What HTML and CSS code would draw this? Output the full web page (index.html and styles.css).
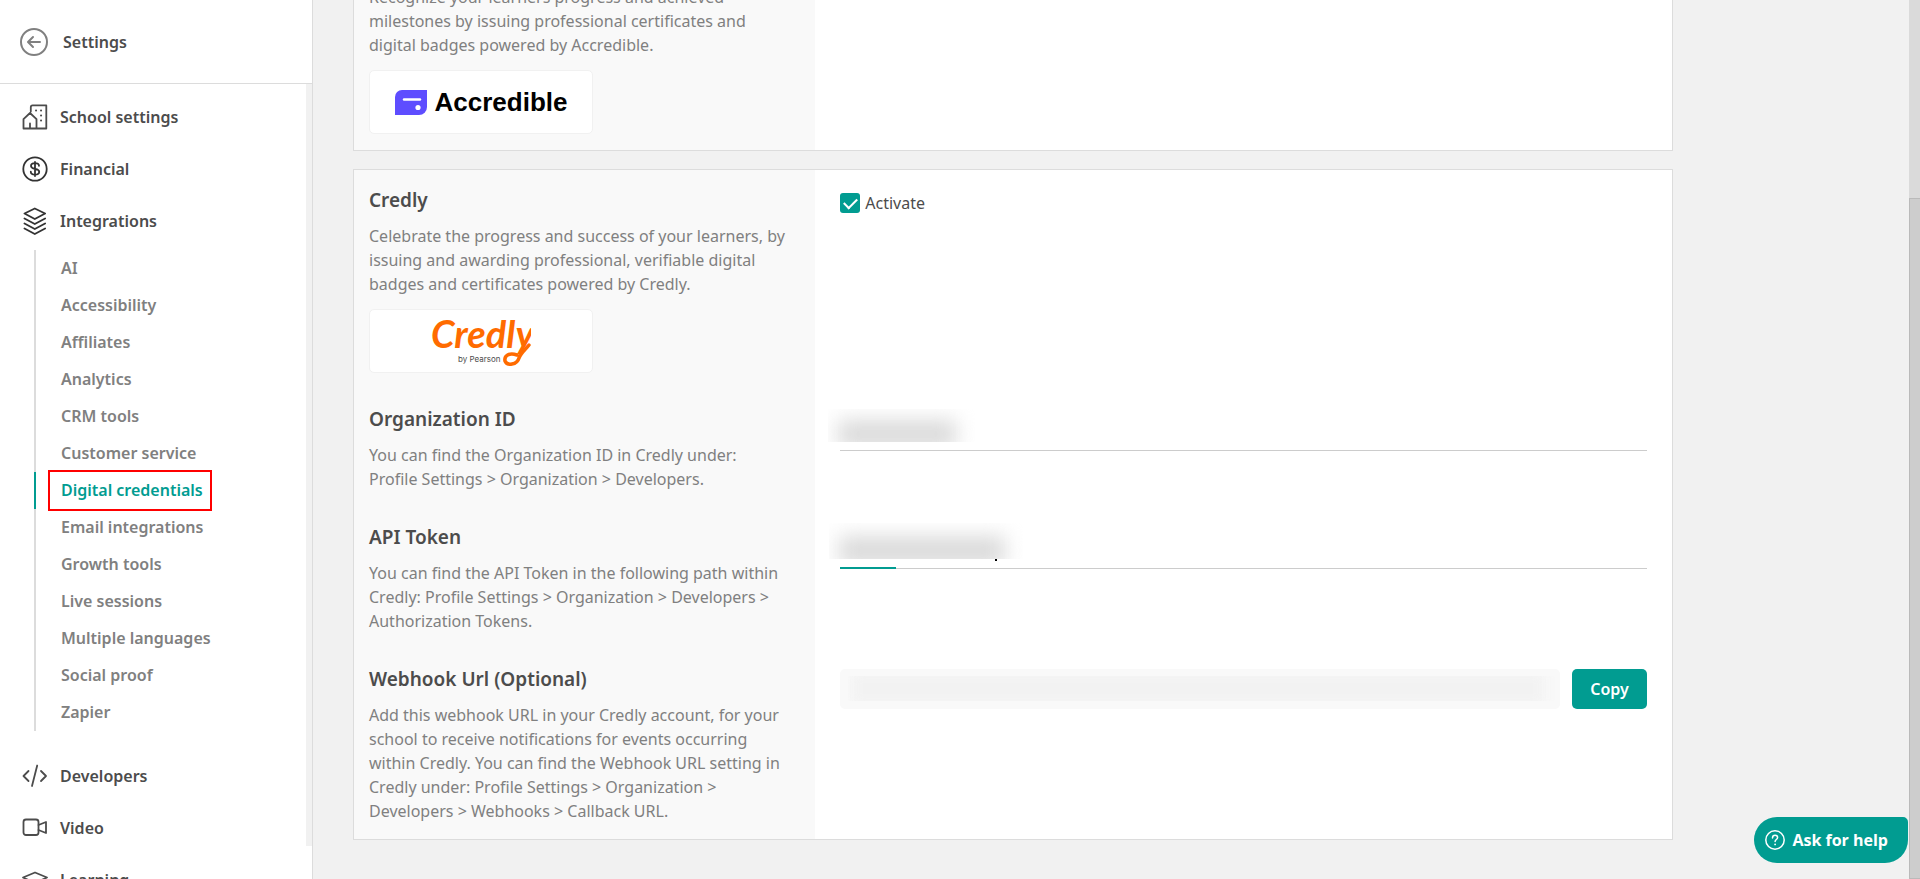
FILE: index.html
```html
<!DOCTYPE html>
<html lang="en">
<head>
  <meta charset="UTF-8" />
  <meta name="viewport" content="width=device-width, initial-scale=1.0" />
  <title>Settings - Digital credentials</title>
  <link rel="stylesheet" href="styles.css">
</head>
<body>
  <div class="app">
    <aside class="sidebar">
      <header class="sidebar-header">
        <a href="#" class="back" aria-label="Back">
          <svg width="28" height="28" viewBox="0 0 28 28" fill="none" stroke="#808080" stroke-width="2" stroke-linecap="round" stroke-linejoin="round">
            <circle cx="14" cy="14" r="13"/>
            <path d="M20 14H8.5M13 9l-5 5 5 5"/>
          </svg>
        </a>
        <span>Settings</span>
      </header>

      <div class="sidebar-body">
        <nav class="menu">
          <a href="#" class="menu-item">
            <svg width="26" height="26" viewBox="0 0 26 26" fill="none" stroke="#4c4c4c" stroke-width="1.8" stroke-linecap="round" stroke-linejoin="round">
              <path d="M8.800 7.500V3.200A1.800 1.800 0 0 1 10.600 1.400H24.300V24.500H14.500M1.500 24.500V15.200L8 9l6.500 6.200V24.500zM8 24.300v-4.800"/>
              <path d="M14 6.500h.1M19 6.500h.1M19 11.500h.1M19 16.500h.1" stroke-width="2"/>
            </svg>
            School settings
          </a>
          <a href="#" class="menu-item">
            <svg width="26" height="26" viewBox="0 0 26 26" fill="none" stroke="#333" stroke-width="1.800" stroke-linecap="round" stroke-linejoin="round">
              <circle cx="13" cy="13" r="11.700"/>
              <path d="M17 9.800c0-1.700-1.500-2.600-4-2.600s-4 1-4 2.800c0 4 8.200 1.800 8.200 5.700 0 1.900-1.700 2.900-4.200 2.900s-4.200-1-4.200-2.900M13 6v14"/>
            </svg>
            Financial
          </a>
          <a href="#" class="menu-item">
            <svg width="26" height="28" viewBox="0 0 26 28" fill="none" stroke="#333" stroke-width="1.800" stroke-linecap="round" stroke-linejoin="round">
              <path d="M2.500 6.500L12.800 1.500l10.300 5L12.800 12zM2.500 11.500L12.800 17l10.300-5.500M2.500 16.500L12.800 22l10.300-5.500M2.500 21.500L12.800 27l10.300-5.500"/>
            </svg>
            Integrations
          </a>
          <div class="submenu">
            <a href="#">AI</a>
            <a href="#">Accessibility</a>
            <a href="#">Affiliates</a>
            <a href="#">Analytics</a>
            <a href="#">CRM tools</a>
            <a href="#">Customer service</a>
            <a href="#" class="active"><span>Digital credentials</span></a>
            <a href="#">Email integrations</a>
            <a href="#">Growth tools</a>
            <a href="#">Live sessions</a>
            <a href="#">Multiple languages</a>
            <a href="#">Social proof</a>
            <a href="#">Zapier</a>
          </div>
          <a href="#" class="menu-item">
            <svg width="26" height="26" viewBox="0 0 26 26" fill="none" stroke="#4c4c4c" stroke-width="1.800" stroke-linecap="round" stroke-linejoin="round">
              <path d="M6.500 8L1.500 13l5 5M19 8l5 5-5 5M15.200 2.500L10 23"/>
            </svg>
            Developers
          </a>
          <a href="#" class="menu-item">
            <svg width="26" height="26" viewBox="0 0 26 26" fill="none" stroke="#4c4c4c" stroke-width="1.800" stroke-linecap="round" stroke-linejoin="round">
              <rect x="1.500" y="4.500" width="15" height="15.500" rx="2.500"/>
              <path d="M16.500 10l7.500-3v11l-7.500-3"/>
            </svg>
            Video
          </a>
          <a href="#" class="menu-item">
            <svg width="26" height="26" viewBox="0 0 26 26" fill="none" stroke="#4c4c4c" stroke-width="1.800" stroke-linecap="round" stroke-linejoin="round">
              <path d="M1 10.500L13 5.500l12 5-12 5.500zM5 13v7c4 3.500 12 3.500 16 0v-7"/>
            </svg>
            Learning
          </a>
        </nav>
        <div class="sidebar-scroll"></div>
      </div>
    </aside>

    <main class="content">
      <section class="card">
        <div class="row">
          <div class="info">
            <h2>Accredible</h2>
            <p>Recognize your learners progress and achieved<br>milestones by issuing professional certificates and<br>digital badges powered by Accredible.</p>
            <div class="logo-box">
              <div class="accredible">
                <svg width="32" height="25" viewBox="0 0 32 25">
                  <path d="M7 0H32V17a8 8 0 0 1-8 8H0V7a7 7 0 0 1 7-7z" fill="#5e4dff"/>
                  <path d="M9 9.500h16" stroke="#fff" stroke-width="2.400" stroke-linecap="round"/>
                  <circle cx="23" cy="17.500" r="2.600" fill="#fff"/>
                </svg>
                <span>Accredible</span>
              </div>
            </div>
          </div>
          <div class="field"></div>
        </div>
      </section>

      <section class="card">
        <div class="row">
          <div class="info">
            <h2>Credly</h2>
            <p>Celebrate the progress and success of your learners, by<br>issuing and awarding professional, verifiable digital<br>badges and certificates powered by Credly.</p>
            <div class="logo-box">
              <svg width="100" height="54" viewBox="0 0 100 54" role="img" aria-label="Credly by Pearson">
                <text x="0" y="34" class="credly-word">Credly</text>
                <path d="M86 41C78 38 73 42 74 47c2 5 12 4 14-3 2-5 6-8 10-13" fill="none" stroke="#ff6b00" stroke-width="3.500" stroke-linecap="round"/>
                <text x="27" y="48" class="credly-by">by Pearson</text>
              </svg>
            </div>
          </div>
          <div class="field">
            <label class="check" for="activate">
              <input type="checkbox" id="activate" checked>
              Activate
            </label>
          </div>
        </div>

        <div class="row">
          <div class="info">
            <h2><label for="orgId">Organization ID</label></h2>
            <p>You can find the Organization ID in Credly under:<br>Profile Settings &gt; Organization &gt; Developers.</p>
          </div>
          <div class="field">
            <div class="line-input">
              <input type="text" id="orgId">
              <span class="redacted redacted-org"></span>
            </div>
          </div>
        </div>

        <div class="row">
          <div class="info">
            <h2><label for="apiToken">API Token</label></h2>
            <p>You can find the API Token in the following path within<br>Credly: Profile Settings &gt; Organization &gt; Developers &gt;<br>Authorization Tokens.</p>
          </div>
          <div class="field">
            <div class="line-input focusing">
              <input type="text" id="apiToken">
              <span class="redacted redacted-token"></span>
              <span class="dot"></span>
            </div>
          </div>
        </div>

        <div class="row">
          <div class="info">
            <h2><label for="webhook">Webhook Url (Optional)</label></h2>
            <p>Add this webhook URL in your Credly account, for your<br>school to receive notifications for events occurring<br>within Credly. You can find the Webhook URL setting in<br>Credly under: Profile Settings &gt; Organization &gt;<br>Developers &gt; Webhooks &gt; Callback URL.</p>
          </div>
          <div class="field">
            <div class="copy-row">
              <div class="webhook">
                <input type="text" id="webhook" readonly>
                <span class="redacted redacted-url"></span>
              </div>
              <button type="button" class="copy-btn">Copy</button>
            </div>
          </div>
        </div>
      </section>
    </main>

    <div class="page-scroll"><div class="thumb"></div></div>
  </div>

  <button type="button" class="help-btn">
    <svg width="20" height="20" viewBox="0 0 20 20" fill="none" stroke="#fff" stroke-width="1.500" stroke-linecap="round">
      <circle cx="10" cy="10" r="9.200"/>
      <path d="M7.500 8c0-1.700 1.100-2.700 2.600-2.700s2.500 1 2.500 2.300c0 1.900-2.500 2-2.500 4"/>
      <path d="M10.100 14.300v.1" stroke-width="1.800"/>
    </svg>
    Ask for help
  </button>
</body>
</html>
```
FILE: styles.css
```css
* {
  box-sizing: border-box;
  margin: 0;
  padding: 0;
}

body {
  font-family: "Segoe UI", "Noto Sans", "Open Sans", sans-serif;
  font-size: 16px;
  color: #4c4c4c;
  background: #f1f1f1;
}

a {
  color: inherit;
  text-decoration: none;
}

input, button {
  font-family: inherit;
  font-size: 16px;
}

.app {
  display: flex;
  height: 100vh;
  overflow: hidden;
}

/* Sidebar */
.sidebar {
  flex: 0 0 313px;
  display: flex;
  flex-direction: column;
  background: #fff;
  border-right: 1px solid #dcdcdc;
  font-weight: 600;
}

.sidebar-header {
  display: flex;
  align-items: center;
  gap: 15px;
  flex: 0 0 84px;
  padding-left: 20px;
  border-bottom: 1px solid #dcdcdc;
}

.back {
  display: flex;
}

.sidebar-body {
  flex: 1;
  display: flex;
  min-height: 0;
}

.menu {
  flex: 1;
  padding-top: 7px;
  overflow: hidden;
}

.menu-item {
  display: flex;
  align-items: center;
  gap: 12px;
  height: 52px;
  padding-left: 22px;
}

.submenu {
  margin: 3px 0 19px 34px;
}

.submenu a {
  display: block;
  height: 37px;
  line-height: 37px;
  padding-left: 25px;
  border-left: 2px solid #dcdcdc;
  color: #808080;
}

.submenu .active {
  color: #019c91;
  border-left-color: #019c91;
}

.active span {
  position: relative;
  display: inline-block;
}

.active span::after {
  content: "";
  position: absolute;
  inset: -2px -9px -2px -13px;
  border: 2px solid #f00;
}

.sidebar-scroll {
  width: 6px;
  margin-bottom: 33px;
  background: #f1f1f1;
}

/* Content, kept at the end of the scroll area */
.content {
  flex: 1;
  display: flex;
  flex-direction: column;
  justify-content: flex-end;
  gap: 18px;
  padding: 0 40px 39px;
}

.card {
  flex: none;
  max-width: 1320px;
  background: #fff;
  border: 1px solid #dcdcdc;
}

.row {
  display: grid;
  grid-template-columns: 35% 1fr;
}

.info {
  padding: 16px 15px;
  background: #f9f9f9;
}

.info h2 {
  margin-bottom: 10px;
  font-size: 19px;
  font-weight: 600;
  line-height: 28px;
}

.info p {
  color: #808080;
  line-height: 24px;
}

.logo-box {
  display: flex;
  align-items: center;
  justify-content: center;
  width: 224px;
  height: 64px;
  margin-top: 13px;
  background: #fff;
  border: 1px solid #f1f1f1;
  border-radius: 5px;
}

.accredible {
  display: flex;
  align-items: center;
  gap: 8px;
  font-family: "Liberation Sans", Arial, sans-serif;
  font-size: 26px;
  font-weight: 700;
  line-height: 28px;
  color: #000;
}

.credly-word {
  font-family: Lato, sans-serif;
  font-size: 38px;
  font-style: italic;
  font-weight: 700;
  fill: #ff6b00;
}

.credly-by {
  font-family: Inter, sans-serif;
  font-size: 8px;
  fill: #4c4c4c;
}

.field {
  padding: 16px 25px;
}

.check {
  display: inline-flex;
  align-items: center;
  gap: 5px;
  height: 34px;
}

.check input {
  appearance: none;
  width: 20px;
  height: 20px;
  border-radius: 3px;
  background: #019c91;
}

.check input:checked::after {
  content: "";
  display: block;
  width: 11px;
  height: 6px;
  margin: 5px auto;
  border: solid #fff;
  border-width: 0 0 2px 2px;
  transform: rotate(-45deg);
}

.line-input {
  position: relative;
}

.line-input input {
  display: block;
  width: 100%;
  height: 46px;
  border: 0;
  border-bottom: 1px solid #ccc;
  background: none;
  outline: 0;
}

.focusing::after {
  content: "";
  position: absolute;
  left: 0;
  bottom: 0;
  width: 56px;
  height: 2px;
  background: #019c91;
}

/* Hidden values */
.redacted {
  position: absolute;
  overflow: hidden;
}

.redacted::before {
  content: "";
  position: absolute;
  background: #dadada;
  filter: blur(10px);
}

.redacted-org {
  left: -12px;
  top: 4px;
  width: 154px;
  height: 33px;
}

.redacted-org::before {
  inset: 11px 26px -6px 10px;
}

.redacted-token {
  left: -11px;
  top: 0;
  width: 194px;
  height: 36px;
}

.redacted-token::before {
  inset: 13px 18px -6px 10px;
}

.dot {
  position: absolute;
  left: 155px;
  bottom: 8px;
  width: 2px;
  height: 2px;
  background: #000;
}

.copy-row {
  display: flex;
  gap: 12px;
  padding-top: 4px;
}

.webhook {
  position: relative;
  flex: 1;
}

.webhook input {
  display: block;
  width: 100%;
  height: 40px;
  border: 0;
  border-radius: 5px;
  background: #f9f9f9;
}

.redacted-url {
  inset: 7px 2px 8px 8px;
}

.redacted-url::before {
  inset: -4px 14px -4px 4px;
  background: #f2f2f2;
  filter: blur(6px);
}

.copy-btn {
  width: 75px;
  height: 40px;
  border: 0;
  border-radius: 5px;
  background: #019c91;
  color: #fff;
  font-weight: 600;
}

/* Page scrollbar */
.page-scroll {
  flex: 0 0 11px;
  display: flex;
  flex-direction: column;
  justify-content: flex-end;
  background: #dadada;
}

.thumb {
  height: 77.5%;
  background: #cdcdcd;
  border: 1px solid #bababa;
  border-right: 0;
}

.help-btn {
  position: fixed;
  right: 12px;
  bottom: 16px;
  display: flex;
  align-items: center;
  gap: 7px;
  height: 46px;
  padding: 0 20px 0 11px;
  border: 0;
  border-radius: 23px 5px 23px 23px;
  background: #019c91;
  color: #fff;
  font-family: "Segoe UI", "Open Sans", sans-serif;
  font-weight: 700;
}
```
